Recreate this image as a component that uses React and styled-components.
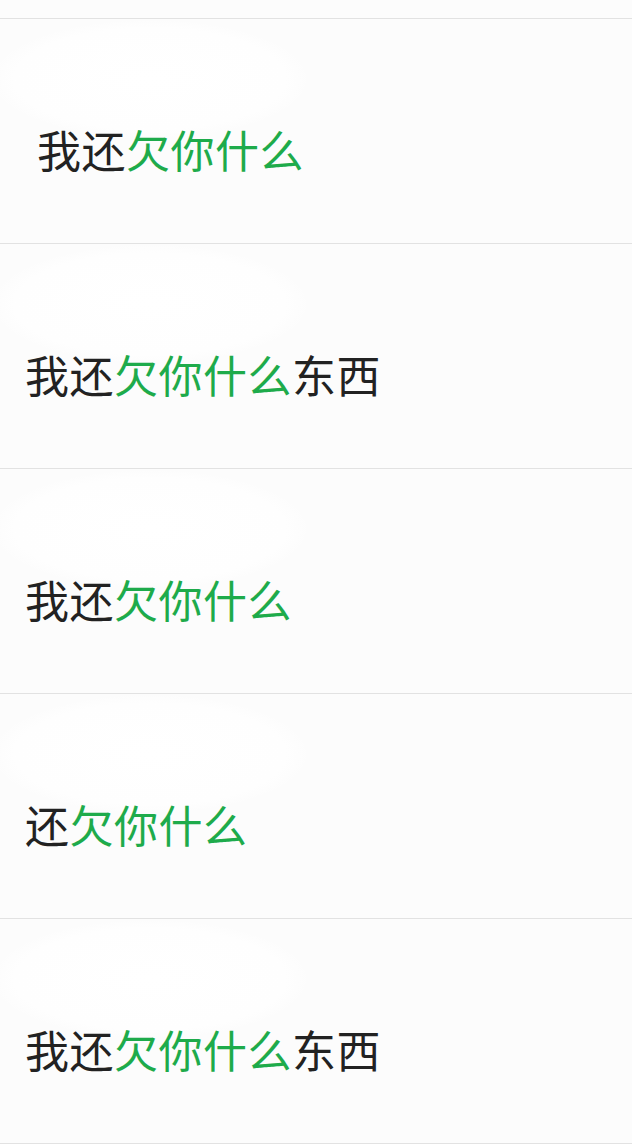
import React from "react";
import styled, { createGlobalStyle } from "styled-components";

const rows = [
    { before: "我还", green: "欠你什么", after: "", indent: 37 },
    { before: "我还", green: "欠你什么", after: "东西", indent: 25 },
    { before: "我还", green: "欠你什么", after: "", indent: 25 },
    { before: "还", green: "欠你什么", after: "", indent: 25 },
    { before: "我还", green: "欠你什么", after: "东西", indent: 25 },
];

const GlobalStyle = createGlobalStyle`
    html, body {
        margin: 0;
        padding: 0;
        background-color: #fcfcfc;
    }
`;

const App = () => {
    return (
        <>
            <GlobalStyle />
            <ListContainer>
                <TopSpacer />
                {rows.map((row, i) => (
                    <ListRow key={i} $indent={row.indent}>
                        <RowText>
                            {row.before}
                            <Highlight>{row.green}</Highlight>
                            {row.after}
                        </RowText>
                    </ListRow>
                ))}
            </ListContainer>
        </>
    );
};

const ListContainer = styled.div`
    width: 632px;
    height: 1144px;
    display: flex;
    flex-direction: column;
    background-color: #fcfcfc;
    font-family: "Noto Sans CJK SC", "Noto Sans", sans-serif;
    overflow: hidden;
`;

const TopSpacer = styled.div`
    height: 19px;
    flex-shrink: 0;
    box-sizing: border-box;
    border-bottom: 1px solid #e2e2e2;
`;

const ListRow = styled.div`
    height: 225px;
    flex-shrink: 0;
    box-sizing: border-box;
    padding: 108px 0 0 ${(p) => p.$indent}px;
    border-bottom: 1px solid #e2e2e2;
    background: radial-gradient(
            ellipse 160px 60px at 150px 60px,
            #ffffff 0%,
            #fefefe 85%,
            rgba(253, 253, 253, 0) 100%
        ),
        #fcfcfc;
`;

const RowText = styled.div`
    font-size: 44px;
    line-height: 44px;
    letter-spacing: 0.5px;
    color: #222222;
    white-space: nowrap;
`;

const Highlight = styled.span`
    color: #1eab4b;
`;

export default App;
